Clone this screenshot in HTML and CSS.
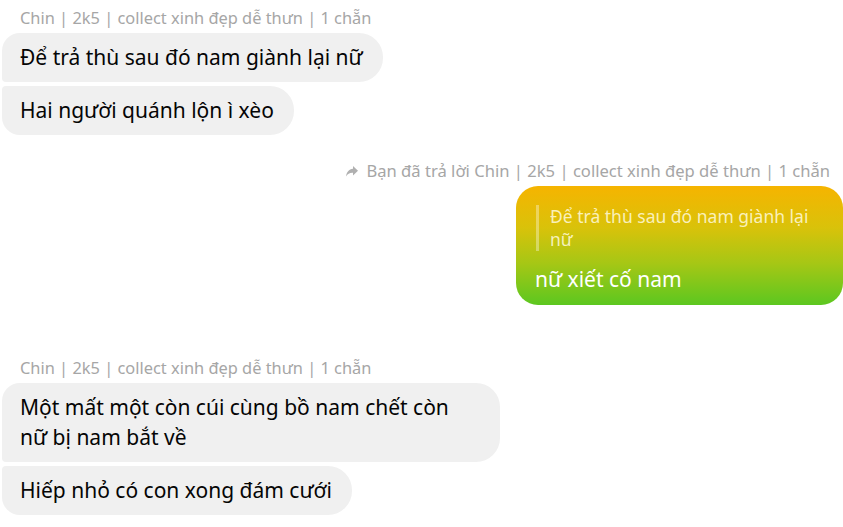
FILE: index.html
```html
<!DOCTYPE html>
<html lang="vi">
<head>
<meta charset="utf-8">
<link rel="stylesheet" href="styles.css">
</head>
<body>
<div class="chat">
  <div class="group incoming first-group">
    <div class="sender">Chin | 2k5 | collect xinh đẹp dễ thưn | 1 chẵn</div>
    <div class="bubble top">Để trả thù sau đó nam giành lại nữ</div>
    <div class="bubble bottom">Hai người quánh lộn ì xèo</div>
  </div>

  <div class="group outgoing">
    <div class="reply-meta">
      <svg class="reply-icon" width="12" height="11" viewBox="0 0 12 11"><path d="M7 0 L12 4.8 L7 9.6 V6.8 C3.8 6.6 1.8 7.6 0 10.6 C0.6 6.2 2.8 3.3 7 2.8 Z" fill="#b0b0b0"/></svg>
      <span>Bạn đã trả lời Chin | 2k5 | collect xinh đẹp dễ thưn | 1 chẵn</span>
    </div>
    <div class="bubble gradient">
      <div class="quote">Để trả thù sau đó nam giành lại nữ</div>
      <div class="main">nữ xiết cố nam</div>
    </div>
  </div>

  <div class="group incoming">
    <div class="sender">Chin | 2k5 | collect xinh đẹp dễ thưn | 1 chẵn</div>
    <div class="bubble top wide">Một mất một còn cúi cùng bồ nam chết còn nữ bị nam bắt về</div>
    <div class="bubble bottom">Hiếp nhỏ có con xong đám cưới</div>
  </div>
</div>
</body>
</html>
```

FILE: styles.css
```css
* { box-sizing: border-box; }
html, body {
  margin: 0;
  padding: 0;
  background: #ffffff;
}
body {
  font-family: "Noto Sans", "Open Sans", sans-serif;
  color: #050505;
  width: 843px;
  height: 527px;
  overflow: hidden;
}
.chat {
  display: flex;
  flex-direction: column;
}
.group {
  display: flex;
  flex-direction: column;
}
.incoming {
  align-items: flex-start;
  padding-left: 2px;
}
.first-group { margin-top: 8px; }
.sender {
  font-size: 16.4px;
  line-height: 20px;
  color: #a6a6a6;
  padding-left: 18px;
  margin-bottom: 5px;
}
.bubble {
  background: #f0f0f0;
  font-size: 21px;
  line-height: 30px;
  padding: 9px 20px 10px 18px;
  border-radius: 24px;
}
.incoming .bubble.top {
  border-radius: 18px 24px 24px 4px;
  margin-bottom: 4px;
}
.incoming .bubble.bottom {
  border-radius: 4px 24px 24px 18px;
}
.bubble.wide {
  width: 498px;
  padding-right: 30px;
}
.outgoing {
  align-items: flex-end;
  margin-top: 26px;
  margin-bottom: 53px;
}
.reply-meta {
  display: flex;
  align-items: center;
  gap: 8px;
  font-size: 16.6px;
  line-height: 20px;
  color: #a6a6a6;
  padding-right: 13px;
  margin-bottom: 5px;
}
.reply-icon { flex: none; }
.bubble.gradient {
  width: 327px;
  border-radius: 22px;
  background: linear-gradient(to bottom, #f6b400 0%, #d9c20a 35%, #a6c715 65%, #5cc720 100%);
  color: #ffffff;
  padding: 19px 19px 11px 19px;
}
.quote {
  border-left: 3px solid rgba(255, 255, 255, 0.35);
  padding-left: 11px;
  font-size: 17.5px;
  line-height: 23px;
  color: rgba(255, 250, 220, 0.85);
  margin-left: 1px;
  margin-bottom: 14px;
}
.main {
  font-size: 21px;
  line-height: 29px;
}
```
